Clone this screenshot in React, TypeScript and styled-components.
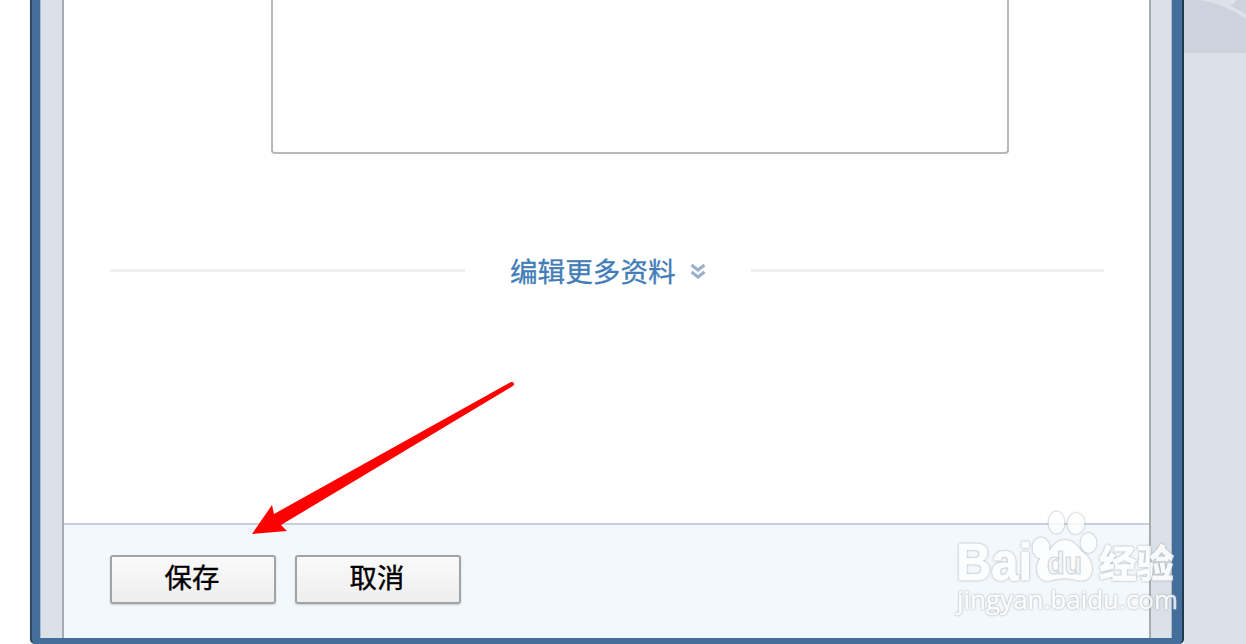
import React from 'react';
import styled, { createGlobalStyle } from 'styled-components';

const GlobalStyle = createGlobalStyle`
  body {
    margin: 0;
    overflow: hidden;
    background: #ffffff;
  }
`;

const Page = styled.div`
  position: relative;
  display: flex;
  width: 1246px;
  height: 644px;
  overflow: hidden;
  font-family: "Noto Sans CJK SC", sans-serif;
`;

const Gutter = styled.div`
  flex: 0 0 30px;
`;

const WindowFrame = styled.div`
  display: flex;
  box-sizing: border-box;
  width: 1154px;
  height: 644px;
  padding: 0 10px 6px 8px;
  border-left: 2px solid #2d4a62;
  border-right: 2px solid #23394f;
  border-radius: 0 0 5px 5px;
  background: #436e9b;
  box-shadow: 0 0 1px #8795a3;
`;

const WindowBody = styled.div`
  flex: 1;
  box-sizing: border-box;
  padding: 0 21px 0 22px;
  background: #dae1e8;
  box-shadow: inset 1px 0 #a9bccd, inset -1px 0 #a9bccd;
`;

const Panel = styled.div`
  display: flex;
  flex-direction: column;
  box-sizing: border-box;
  height: 100%;
  border-left: 2px solid #a5acb1;
  border-right: 2px solid #a5acb1;
  background: #ffffff;
`;

const Form = styled.div`
  flex: 1;
`;

const TextBox = styled.div`
  box-sizing: border-box;
  width: 738px;
  height: 154px;
  margin-left: 207px;
  border: 2px solid #b8b8b8;
  border-top: none;
  border-radius: 0 0 4px 4px;
`;

const MoreRow = styled.div`
  display: flex;
  align-items: center;
  height: 40px;
  margin: 96px 0 0 46px;
`;

const Rule = styled.div<{ $width: number }>`
  width: ${({ $width }) => $width}px;
  height: 3px;
  background: #f0f0f0;
`;

const MoreLink = styled.a`
  display: flex;
  align-items: center;
  width: 241px;
  margin-left: 45px;
  color: #427db7;
  font-size: 27.6px;
  line-height: 38px;
  white-space: nowrap;
  -webkit-text-stroke: 0.3px #427db7;
`;

const Chevrons = styled.svg`
  margin: 4px 0 0 14px;
`;

const Footer = styled.div`
  display: flex;
  gap: 19px;
  box-sizing: border-box;
  height: 115px;
  padding: 30px 0 0 46px;
  border-top: 2px solid #c7d0d8;
  background: #f3f8fd;
`;

const FormButton = styled.button`
  box-sizing: border-box;
  width: 166px;
  height: 49px;
  padding: 0 2px 7px 0;
  border: 2px solid #a2a3a4;
  border-radius: 3px;
  background: linear-gradient(#fafafa, #eeeeee);
  box-shadow: 0 1px 2px #c9cdd0;
  color: #000000;
  font-family: inherit;
  font-size: 27.4px;
  line-height: 38px;
  -webkit-text-stroke: 0.4px #000000;
`;

const Backdrop = styled.div`
  flex: 1;
  background: #dbe1e8;
`;

const BackdropArt = styled.svg`
  display: block;
`;

const Arrow = styled.svg`
  position: absolute;
  left: 250px;
  top: 380px;
`;

const Watermark = styled.svg`
  position: absolute;
  left: 946px;
  top: 504px;
`;

const Glow = styled.g`
  filter: drop-shadow(0 0 0.8px #8c9296);
  opacity: 0.82;
`;

function App() {
  return (
    <Page>
      <GlobalStyle />
      <Gutter />
      <WindowFrame>
        <WindowBody>
          <Panel>
            <Form>
              <TextBox />
              <MoreRow>
                <Rule $width={355} />
                <MoreLink>
                  编辑更多资料
                  <Chevrons width="17" height="18" viewBox="0 0 17 18" fill="none" stroke="#9aafc9" strokeWidth="3">
                    <path d="M1.500 2L8 7L14.500 2" />
                    <path d="M1.500 9L8 14L14.500 9" />
                  </Chevrons>
                </MoreLink>
                <Rule $width={353} />
              </MoreRow>
            </Form>
            <Footer>
              <FormButton>保存</FormButton>
              <FormButton>取消</FormButton>
            </Footer>
          </Panel>
        </WindowBody>
      </WindowFrame>
      <Backdrop>
        <BackdropArt width="62" height="53" viewBox="0 0 62 53">
          <rect width="62" height="53" fill="#ccd3dc" />
          <path d="M17 0Q43 5 62 19V14L47 6L53 0Z" fill="#dce2e8" />
        </BackdropArt>
      </Backdrop>

      <Arrow width="268" height="158" viewBox="0 0 268 158">
        <path d="M2 154L22 125L24 134L261 2Q264 1.500 264.200 4Q264 5.500 262 6.500L31 145L37 151Z" fill="#ff0000" />
      </Arrow>

      <Watermark width="240" height="120" viewBox="0 0 240 120">
        <Glow fill="#ffffff">
          <ellipse cx="95" cy="44" rx="8.500" ry="10.500" />
          <ellipse cx="110.500" cy="18.500" rx="8" ry="11" />
          <ellipse cx="130" cy="19.500" rx="8.500" ry="10.500" transform="rotate(8 130 19.5)" />
          <ellipse cx="142.500" cy="39" rx="8" ry="10" />
          <path d="M118.500 46C111 46 108 50 103 54C97 58 90 61 91 69C92 76 98 78 105 77C114 75 123 75 132 77C140 78 146 75 146 68C146 60 139 57 134 53C129 49 126 46 118.500 46Z" transform="translate(0 -24.300) scale(1 1.310)" />
          <text x="10" y="76" fontFamily="Liberation Sans, sans-serif" fontSize="51" fontWeight="700" stroke="#ffffff" strokeWidth="1" textLength="76" lengthAdjust="spacingAndGlyphs">Bai</text>
          <text x="153" y="73" fontFamily="Noto Sans CJK SC, sans-serif" fontSize="38" fontWeight="700" stroke="#ffffff" strokeWidth="1" textLength="75" lengthAdjust="spacingAndGlyphs">经验</text>
          <text x="11" y="105" fontFamily="Open Sans, sans-serif" fontSize="25" stroke="#ffffff" strokeWidth="0.400" textLength="221" lengthAdjust="spacingAndGlyphs">jingyan.baidu.com</text>
        </Glow>
        <text x="101" y="70" fontFamily="Liberation Sans, sans-serif" fontSize="31" fontWeight="700" fill="#f4f6f8" stroke="#d2d6d9" strokeWidth="1.200" textLength="35" lengthAdjust="spacingAndGlyphs">du</text>
      </Watermark>
    </Page>
  );
}

export default App;
